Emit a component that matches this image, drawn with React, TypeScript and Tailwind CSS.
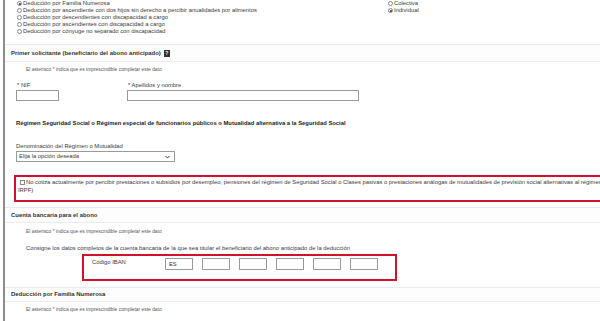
import React from "react"

function Radio({ checked = false }: { checked?: boolean }) {
  return (
    <span className="inline-flex h-[5px] w-[5px] shrink-0 items-center justify-center rounded-full border border-[#8a8a8a] bg-white">
      {checked && <span className="h-[2px] w-[2px] rounded-full bg-[#333]" />}
    </span>
  )
}

function Option({ label, checked }: { label: string; checked?: boolean }) {
  return (
    <div className="flex h-[7px] items-center gap-[1px] whitespace-nowrap leading-[7px]">
      <Radio checked={checked} />
      <span>{label}</span>
    </div>
  )
}

function SectionHeader({ title, help, h }: { title: string; help?: boolean; h: string }) {
  return (
    <div className={`flex ${h} items-center gap-[3px] border-y border-[#ebebeb] bg-[#fdfdfd] pl-[6px] text-[5.95px] font-bold text-[#333]`}>
      <span>{title}</span>
      {help && (
        <span className="flex h-[7px] w-[6px] items-center justify-center bg-[#333] text-[5px] leading-none text-white">
          ?
        </span>
      )}
    </div>
  )
}

function Hint({ className = "" }: { className?: string }) {
  return (
    <div className={`h-[8px] pl-[21px] text-[4.9px] leading-[8px] text-[#555] ${className}`}>
      El asterisco * indica que es imprescindible completar este dato
    </div>
  )
}

function Box({ w, children }: { w: string; children?: React.ReactNode }) {
  return (
    <div className={`h-[12px] ${w} border border-[#9a9a9a] bg-white pl-[3px] text-[5.8px] leading-[10px] text-[#333]`}>
      {children}
    </div>
  )
}

export default function App() {
  return (
    <div className="h-[321px] w-[600px] overflow-hidden bg-white" style={{ fontFamily: '"Liberation Sans", Arial, sans-serif' }}>
      <div className="ml-[3px] h-full w-[640px] border-l-2 border-[#8c8c8c] text-[5.85px] text-[#3a3a3a]">
        {/* deduction options */}
        <div className="flex h-[38px] pl-[12px]">
          <div className="w-[371px]">
            <Option label="Deducción por Familia Numerosa" checked />
            <Option label="Deducción por ascendiente con dos hijos sin derecho a percibir anualidades por alimentos" />
            <Option label="Deducción por descendientes con discapacidad a cargo" />
            <Option label="Deducción por ascendientes con discapacidad a cargo" />
            <Option label="Deducción por cónyuge no separado con discapacidad" />
          </div>
          <div>
            <Option label="Colectiva" />
            <Option label="Individual" checked />
          </div>
        </div>

        <div className="mt-[6px]">
          <SectionHeader title="Primer solicitante (beneficiario del abono anticipado)" help h="h-[18px]" />
        </div>
        <Hint className="mt-[4px]" />

        <div className="mt-[8px] flex pl-[11px]">
          <div className="w-[111px]">
            <div className="h-[7px] pl-[1px] leading-[7px]">* NIF</div>
            <div className="mt-[1px] h-[11px] w-[43px] border border-[#9a9a9a] bg-white" />
          </div>
          <div>
            <div className="h-[7px] pl-[1px] leading-[7px]">* Apellidos y nombre</div>
            <div className="mt-[1px] h-[11px] w-[232px] border border-[#9a9a9a] bg-white" />
          </div>
        </div>

        <div className="mt-[18px] h-[8px] pl-[11px] text-[5.85px] font-bold leading-[8px] text-[#222]">
          Régimen Seguridad Social o Régimen especial de funcionarios públicos o Mutualidad alternativa a la Seguridad Social
        </div>

        <div className="mt-[16px] pl-[11px]">
          <div className="h-[7px] leading-[7px]">Denominación del Régimen o Mutualidad</div>
          <div className="mt-[1px] flex h-[11px] w-[159px] items-center justify-between border border-[#9a9a9a] bg-white px-[2px]">
            <span>Elija la opción deseada</span>
            <svg width="5" height="4" viewBox="0 0 5 4" className="mr-[2px]">
              <path d="M0.5 1 L2.5 3 L4.5 1" fill="none" stroke="#333" strokeWidth="1" />
            </svg>
          </div>
        </div>

        <div className="ml-[9px] mt-[13px] h-[27px] border-2 border-[#d1132a] pl-[2px] pt-[1px]">
          <div className="flex h-[8px] items-center gap-[1px] whitespace-nowrap leading-[8px]">
            <span className="ml-[2px] inline-block h-[5px] w-[5px] shrink-0 border border-[#8a8a8a] bg-white" />
            <span>
              No cotiza actualmente por percibir prestaciones o subsidios por desempleo, pensiones del régimen de Seguridad Social o Clases pasivas o prestaciones análogas de mutualidades de previsión social alternativas al régimen
            </span>
          </div>
          <div className="h-[8px] leading-[8px]">IRPF)</div>
        </div>

        <div className="mt-[5px]">
          <SectionHeader title="Cuenta bancaria para el abono" h="h-[16px]" />
        </div>
        <Hint className="mt-[5px]" />
        <div className="mt-[8px] h-[8px] pl-[21px] leading-[8px]">
          Consigne los datos completos de la cuenta bancaria de la que sea titular el beneficiario del abono anticipado de la deducción
        </div>

        <div className="ml-[77px] mt-[2px] flex h-[27px] w-[315px] items-start border-2 border-[#d1132a] pl-[8px] pt-[2px]">
          <div className="h-[8px] w-[73px] leading-[8px]">Código IBAN</div>
          <div className="flex gap-[9px]">
            <Box w="w-[28px]">ES</Box>
            <Box w="w-[28px]" />
            <Box w="w-[28px]" />
            <Box w="w-[28px]" />
            <Box w="w-[28px]" />
            <Box w="w-[28px]" />
          </div>
        </div>

        <div className="mt-[6px]">
          <SectionHeader title="Deducción por Familia Numerosa" h="h-[15px]" />
        </div>
        <Hint className="mt-[4px]" />
      </div>
    </div>
  )
}
